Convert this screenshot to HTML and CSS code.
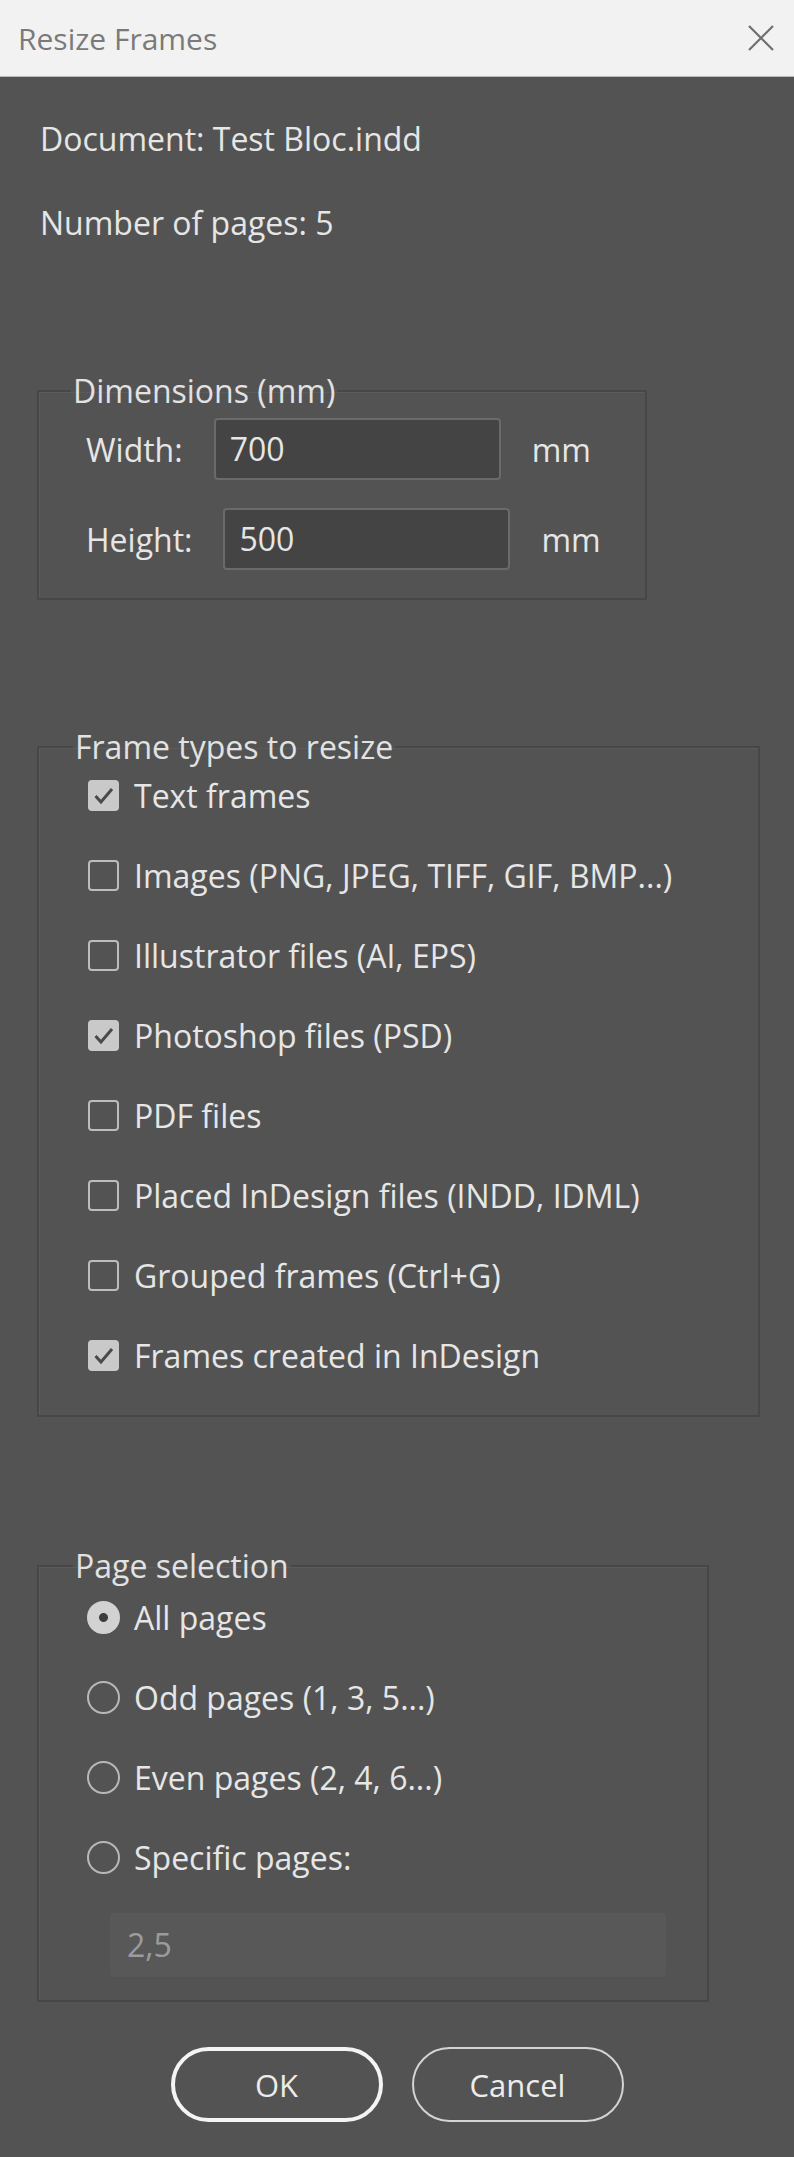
FILE: index.html
```html
<!DOCTYPE html>
<html lang="en">
<head>
	<meta charset="UTF-8">
	<title>Resize Frames</title>
	<link rel="stylesheet" href="styles.css">
</head>
<body>
	<div class="titlebar">
		<span class="title">Resize Frames</span>
		<svg class="close" width="28" height="28" viewBox="0 0 28 28">
			<path d="M2 2L26 26M26 2L2 26" stroke="#6f6f6f" stroke-width="2.2" fill="none"/>
		</svg>
	</div>
	<div class="dialog">
		<p class="info">Document: Test Bloc.indd</p>
		<p class="info info-pages">Number of pages: 5</p>

		<fieldset class="group group-dim">
			<legend>Dimensions (mm)</legend>
			<div class="field-row">
				<span class="field-label">Width:</span>
				<div class="text-input">700</div>
				<span class="unit">mm</span>
			</div>
			<div class="field-row">
				<span class="field-label">Height:</span>
				<div class="text-input">500</div>
				<span class="unit">mm</span>
			</div>
		</fieldset>

		<fieldset class="group group-types">
			<legend>Frame types to resize</legend>
			<div class="option"><span class="check checked"><svg width="31" height="31" viewBox="0 0 31 31"><path d="M7.5 16l5.5 6 11-13" stroke="#4a4a4a" stroke-width="3" fill="none"/></svg></span>Text frames</div>
			<div class="option"><span class="check"></span>Images (PNG, JPEG, TIFF, GIF, BMP...)</div>
			<div class="option"><span class="check"></span>Illustrator files (AI, EPS)</div>
			<div class="option"><span class="check checked"><svg width="31" height="31" viewBox="0 0 31 31"><path d="M7.5 16l5.5 6 11-13" stroke="#4a4a4a" stroke-width="3" fill="none"/></svg></span>Photoshop files (PSD)</div>
			<div class="option"><span class="check"></span>PDF files</div>
			<div class="option"><span class="check"></span>Placed InDesign files (INDD, IDML)</div>
			<div class="option"><span class="check"></span>Grouped frames (Ctrl+G)</div>
			<div class="option"><span class="check checked"><svg width="31" height="31" viewBox="0 0 31 31"><path d="M7.5 16l5.5 6 11-13" stroke="#4a4a4a" stroke-width="3" fill="none"/></svg></span>Frames created in InDesign</div>
		</fieldset>

		<fieldset class="group group-pages">
			<legend>Page selection</legend>
			<div class="option"><span class="radio checked"></span>All pages</div>
			<div class="option"><span class="radio"></span>Odd pages (1, 3, 5...)</div>
			<div class="option"><span class="radio"></span>Even pages (2, 4, 6...)</div>
			<div class="option"><span class="radio"></span>Specific pages:</div>
			<div class="text-input pages-input">2,5</div>
		</fieldset>

		<div class="buttons">
			<button class="btn btn-default">OK</button>
			<button class="btn">Cancel</button>
		</div>
	</div>
</body>
</html>
```

FILE: styles.css
```css
body,p,fieldset,legend{
	margin: 0;
	padding: 0;
}
body{
	width: 794px;
	height: 2157px;
	background: #535353;
	font-family: "Open Sans", "Noto Sans", sans-serif;
	font-size: 32px;
	color: #e6e6e6;
	overflow: hidden;
}
.titlebar{
	display: flex;
	align-items: center;
	justify-content: space-between;
	height: 76px;
	padding: 0 19px 0 18px;
	background: #f2f2f2;
	border-bottom: 1px solid #b9b9b9;
}
.titlebar .title{
	font-size: 30px;
	color: #7a7a7a;
}
.dialog{
	padding: 42px 0 0 40px;
}
.info{
	line-height: 40px;
}
.info-pages{
	margin-top: 44px;
}
.group{
	box-sizing: border-box;
	border: 2px solid #474747;
	box-shadow: inset 1px 1px 0 #5b5b5b;
	margin-left: -3px;
}
.group legend{
	margin-left: -15px;
	padding: 0 2px;
	line-height: 40px;
	color: #e2e2e2;
}
.group-dim{
	width: 610px;
	margin-top: 128px;
	padding: 7px 0 28px 47px;
}
.group-types{
	width: 723px;
	margin-top: 127px;
	padding: 8px 0 40px 49px;
}
.group-pages{
	width: 672px;
	margin-top: 129px;
	padding: 11px 0 23px 49px;
}
.field-row{
	display: flex;
	align-items: center;
	gap: 31px;
}
.field-row + .field-row{
	margin-top: 28px;
}
.text-input{
	box-sizing: border-box;
	width: 287px;
	height: 62px;
	padding: 0 14px;
	line-height: 58px;
	background: #444444;
	border: 2px solid #6a6a6a;
	border-radius: 4px;
}
.option{
	display: flex;
	align-items: center;
	gap: 15px;
	height: 40px;
}
.option + .option{
	margin-top: 40px;
}
.check{
	box-sizing: border-box;
	width: 31px;
	height: 31px;
	border: 2px solid #bdbdbd;
	border-radius: 4px;
	flex: none;
}
.check.checked{
	background: #c9c9c9;
	border-color: #c9c9c9;
}
.check svg{
	display: block;
	margin: -2px;
}
.radio{
	box-sizing: border-box;
	width: 33px;
	height: 33px;
	border: 2px solid #b8b8b8;
	border-radius: 50%;
	flex: none;
	margin-left: -1px;
	margin-right: -1px;
}
.radio.checked{
	background: radial-gradient(circle, #3e3e3e 0 4px, #d2d2d2 5px);
	border-color: #d2d2d2;
}
.pages-input{
	width: 556px;
	height: 64px;
	margin: 36px 0 0 22px;
	line-height: 64px;
	padding: 0 17px;
	background: #585858;
	border: none;
	color: #9c9c9c;
}
.buttons{
	display: flex;
	justify-content: center;
	gap: 29px;
	margin: 45px 0 0 -40px;
}
.btn{
	box-sizing: border-box;
	width: 212px;
	height: 75px;
	background: transparent;
	border: 2px solid #d4d4d4;
	border-radius: 38px;
	font-family: inherit;
	font-size: 31px;
	color: #ececec;
}
.btn-default{
	border: 4px solid #f4f4f4;
}
```
